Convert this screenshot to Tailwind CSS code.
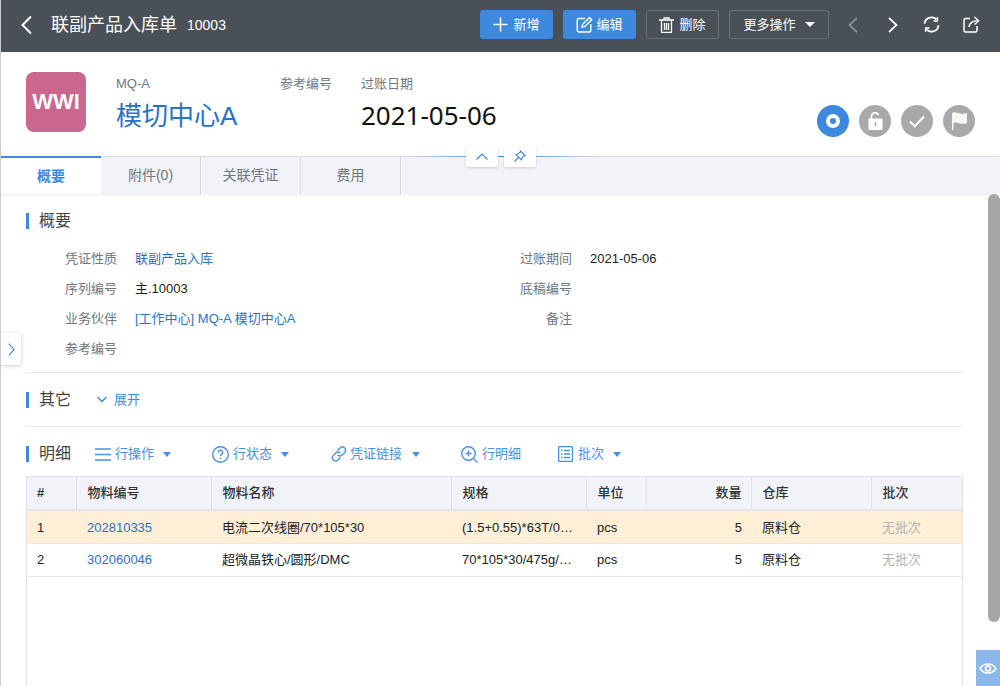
<!DOCTYPE html>
<html lang="zh">
<head>
<meta charset="utf-8">
<script src="https://cdn.jsdelivr.net/npm/@tailwindcss/browser@4"></script>
<title>联副产品入库单</title>
</head>
<body class="bg-white">
<div class="relative w-[1000px] h-[686px] overflow-hidden flex flex-col border-l border-[#cccccc] bg-white text-[13px] text-[#222] font-['Liberation_Sans','Noto_Sans_CJK_SC',sans-serif]">

  <!-- top bar -->
  <header class="h-[52px] shrink-0 bg-[#4a5057] flex items-center pb-[3px] text-white">
    <svg class="ml-[19px] w-[13px] h-[20px]" viewBox="0 0 13 20" fill="none" stroke="#fff" stroke-width="2"><path d="M11 1.500 2.500 10 11 18.500"/></svg>
    <span class="ml-[18px] text-[18px] leading-none">联副产品入库单</span>
    <span class="ml-[10px] text-[14px] leading-none">10003</span>
    <div class="ml-auto flex items-center gap-[10px] mr-[20px]">
      <button class="w-[73px] h-[29px] rounded-[3px] bg-[#3c89dd] flex items-center justify-center gap-[5px]">
        <svg class="w-[15px] h-[15px]" viewBox="0 0 15 15" fill="none" stroke="#fff" stroke-width="1.500"><path d="M7.500 0.500v14M0.500 7.500h14"/></svg>
        <span>新增</span>
      </button>
      <button class="w-[73px] h-[29px] rounded-[3px] bg-[#3c89dd] flex items-center justify-center gap-[3px]">
        <svg class="w-[17px] h-[17px]" viewBox="0 0 17 17" fill="none" stroke="#fff" stroke-width="1.400"><path d="M9 2.500H3a1.800 1.800 0 0 0-1.800 1.800v10A1.800 1.800 0 0 0 3 16h10a1.800 1.800 0 0 0 1.800-1.800V8"/><path d="M6.500 8.500 13.500 1.500l2.200 2.200-7 7-2.700.5z"/></svg>
        <span>编辑</span>
      </button>
      <button class="w-[73px] h-[29px] rounded-[3px] border border-[#697079] flex items-center justify-center gap-[5px]">
        <svg class="w-[15px] h-[16px]" viewBox="0 0 15 16" fill="none" stroke="#fff" stroke-width="1.300"><path d="M0 3h15M5 3V1h5v2M2.500 3v11.500a1 1 0 0 0 1 1h8a1 1 0 0 0 1-1V3M5.500 6v7M7.500 6v7M9.500 6v7"/></svg>
        <span>删除</span>
      </button>
      <button class="w-[100px] h-[29px] rounded-[3px] border border-[#697079] flex items-center justify-center gap-[9px]">
        <span>更多操作</span>
        <span class="w-0 h-0 border-x-[5px] border-x-transparent border-t-[5px] border-t-white"></span>
      </button>
      <div class="flex items-center ml-[9px]">
        <svg class="w-[10px] h-[16px]" viewBox="0 0 10 16" fill="none" stroke="#8a8f95" stroke-width="1.800"><path d="M9 .8 1.500 8 9 15.200"/></svg>
        <svg class="ml-[30px] w-[10px] h-[16px]" viewBox="0 0 10 16" fill="none" stroke="#fff" stroke-width="1.800"><path d="M1 .8 8.500 8 1 15.200"/></svg>
        <svg class="ml-[25px] w-[17px] h-[17px]" viewBox="0 0 17 17" fill="none" stroke="#fff" stroke-width="1.800"><path d="M1.500 7.800A7 7 0 0 1 13.500 3.500"/><path d="M15.500 9.200A7 7 0 0 1 3.500 13.500"/><path d="M14.500 1V5H10.500" stroke-width="1.300"/><path d="M2.500 16V12H6.500" stroke-width="1.300"/></svg>
        <svg class="ml-[23px] w-[17px] h-[17px]" viewBox="0 0 17 17" fill="none" stroke="#fff" stroke-width="1.500"><path d="M7 2.500H2.500a1.500 1.500 0 0 0-1.500 1.500v10.500A1.500 1.500 0 0 0 2.500 16h10a1.500 1.500 0 0 0 1.500-1.500V10"/><path d="M6 11c.5-4 3-6.200 9-6.200"/><path d="M11.500 1 15.800 4.800 11.500 8.500" stroke-width="1.300"/></svg>
      </div>
    </div>
  </header>

  <!-- document head -->
  <section class="h-[104px] shrink-0 flex relative">
    <div class="mt-[20px] ml-[25px] w-[60px] h-[60px] rounded-[8px] bg-[#cb668e] flex items-center justify-center text-white font-bold text-[22px] leading-none">WWI</div>
    <div class="ml-[30px] mt-[24px]">
      <div class="text-[13px] leading-[15px] text-[#6f7780]">MQ-A</div>
      <div class="mt-[7px] text-[26px] leading-[36px] text-[#2a72c9]">模切中心A</div>
    </div>
    <div class="absolute left-[279px] top-[24px] text-[13px] leading-[15px] text-[#6f7780]">参考编号</div>
    <div class="absolute left-[360px] top-[24px]">
      <div class="text-[13px] leading-[15px] text-[#6f7780]">过账日期</div>
      <div class="mt-[6px] text-[26px] leading-[36px] text-[#111] font-['Noto_Sans',sans-serif]">2021-05-06</div>
    </div>
    <div class="ml-auto mt-[53px] mr-[25px] flex gap-[10px] h-[32px]">
      <div class="w-[32px] h-[32px] rounded-full bg-[#3c89dd] flex items-center justify-center">
        <span class="w-[14px] h-[14px] rounded-full border-[4px] border-white"></span>
      </div>
      <div class="w-[32px] h-[32px] rounded-full bg-[#a9a9a9] flex items-center justify-center">
        <svg class="w-[15px] h-[18px]" viewBox="0 0 15 18"><path d="M3.500 7V4.500a3.600 3.600 0 0 1 7-1.200" fill="none" stroke="#fff" stroke-width="1.700"/><rect x=".5" y="6.500" width="14" height="11.500" rx="1" fill="#fff"/><rect x="6.700" y="10" width="1.600" height="4.500" fill="#a9a9a9"/></svg>
      </div>
      <div class="w-[32px] h-[32px] rounded-full bg-[#a9a9a9] flex items-center justify-center">
        <svg class="w-[16px] h-[13px]" viewBox="0 0 16 13" fill="none" stroke="#fff" stroke-width="2"><path d="M1 6.500 5.800 11.300 15 1.500"/></svg>
      </div>
      <div class="w-[32px] h-[32px] rounded-full bg-[#a9a9a9] flex items-center justify-center">
        <svg class="w-[17px] h-[18px]" viewBox="0 0 17 18"><path d="M1 1c3-1.500 5 0 8 .5 2.500.4 4.500.2 7-.5v10c-2.500 1-4.500 1-7 .5-3-.6-5-1.500-6.500-.5V18H1z" fill="#f8f7f2"/></svg>
      </div>
    </div>
  </section>

  <!-- tabs -->
  <nav class="relative h-[38px] shrink-0 flex bg-[#f1f3f8] border-t border-[#d9dde7] shadow-[0_1px_3px_rgba(0,0,0,0.08)] text-[14px] text-[#6f7780]">
    <div class="absolute left-[400px] top-[-1px] w-[200px] h-px bg-linear-to-r from-transparent via-[#3c89dd] to-transparent"></div>
    <div class="relative w-[100px] h-[38px] -mt-px bg-white border-t-2 border-[#3c89dd] flex items-center justify-center font-bold text-[#3c89dd]">概要</div>
    <div class="w-[100px] flex items-center justify-center border-r border-[#d9dde7]">附件(0)</div>
    <div class="w-[100px] flex items-center justify-center border-r border-[#d9dde7]">关联凭证</div>
    <div class="w-[100px] flex items-center justify-center border-r border-[#d9dde7]">费用</div>
    <div class="absolute left-[465px] top-[-12px] flex gap-[6px]">
      <div class="w-[32px] h-[22px] rounded-[2px] bg-white shadow-[0_1px_3px_rgba(0,0,0,0.15)] flex items-center justify-center">
        <svg class="w-[12px] h-[7px]" viewBox="0 0 12 7" fill="none" stroke="#3c89dd" stroke-width="1.200"><path d="M.5 6.500 6 1l5.500 5.500"/></svg>
      </div>
      <div class="w-[32px] h-[22px] rounded-[2px] bg-white shadow-[0_1px_3px_rgba(0,0,0,0.15)] flex items-center justify-center">
        <svg class="w-[12px] h-[12px]" viewBox="0 0 12 12" fill="none" stroke="#3c89dd" stroke-width="1.100"><path d="M6.500 1 11 5.500 9.500 6 7.800 8.500 7.500 10 2 4.500 3.500 4.200 6 2.500zM4.500 7.500.5 11.500"/></svg>
      </div>
    </div>
  </nav>

  <!-- content -->
  <main class="flex-1 min-h-0 flex flex-col pl-[25px] pr-[37px]">
    <div class="pt-[19px] h-[179px] shrink-0 border-b border-[#e8e9ed]">
      <div class="flex items-center h-[16px]">
        <span class="w-[3px] h-[16px] bg-[#3c89dd]"></span>
        <span class="ml-[10px] text-[16px] text-[#444]">概要</span>
      </div>
      <div class="mt-[15px] grid grid-cols-[91px_313px_106px_1fr] gap-x-[18px] auto-rows-[30px] items-center text-[13px] leading-[30px]">
        <span class="text-right text-[#6f7780]">凭证性质</span><span class="text-[#2a72c9]">联副产品入库</span>
        <span class="text-right text-[#6f7780]">过账期间</span><span>2021-05-06</span>
        <span class="text-right text-[#6f7780]">序列编号</span><span>主.10003</span>
        <span class="text-right text-[#6f7780]">底稿编号</span><span></span>
        <span class="text-right text-[#6f7780]">业务伙伴</span><span class="text-[#2a72c9]">[工作中心] MQ-A 模切中心A</span>
        <span class="text-right text-[#6f7780]">备注</span><span></span>
        <span class="text-right text-[#6f7780]">参考编号</span>
      </div>
    </div>

    <div class="h-[54px] shrink-0 flex items-center border-b border-[#e8e9ed]">
      <span class="w-[3px] h-[16px] bg-[#3c89dd]"></span>
      <span class="ml-[10px] text-[16px] text-[#444]">其它</span>
      <svg class="ml-[26px] w-[10px] h-[7px]" viewBox="0 0 10 7" fill="none" stroke="#3c89dd" stroke-width="1.400"><path d="M.5 1 5 5.500 9.500 1"/></svg>
      <span class="ml-[7px] text-[13px] text-[#3c89dd]">展开</span>
    </div>

    <div class="h-[49px] shrink-0 flex items-center pt-[5px] text-[13px] text-[#4a90e2]">
      <span class="w-[3px] h-[16px] bg-[#3c89dd]"></span>
      <span class="ml-[10px] text-[16px] text-[#444]">明细</span>
      <div class="ml-[24px] flex items-center">
        <svg class="w-[16px] h-[13px]" viewBox="0 0 16 13" fill="none" stroke="#4a90e2" stroke-width="1.300"><path d="M0 1h16M0 6.500h16M0 12h16"/></svg>
        <span class="ml-[4px]">行操作</span>
        <span class="ml-[9px] w-0 h-0 border-x-[4.500px] border-x-transparent border-t-[5px] border-t-[#4a90e2]"></span>
      </div>
      <div class="ml-[41px] flex items-center">
        <svg class="w-[17px] h-[17px]" viewBox="0 0 17 17" fill="none" stroke="#4a90e2" stroke-width="1.400"><circle cx="8.500" cy="8.500" r="7.800"/><path d="M6.300 6.500c0-3 4.500-3 4.500-.2 0 1.800-2.300 1.800-2.300 3.700"/><path d="M8.500 11.500v1.500"/></svg>
        <span class="ml-[4px]">行状态</span>
        <span class="ml-[9px] w-0 h-0 border-x-[4.500px] border-x-transparent border-t-[5px] border-t-[#4a90e2]"></span>
      </div>
      <div class="ml-[42px] flex items-center">
        <svg class="w-[16px] h-[16px]" viewBox="0 0 16 16" fill="none" stroke="#4a90e2" stroke-width="1.400"><path d="M6.500 4.500 8.800 2.200a3.200 3.200 0 0 1 5 4.200l-2.600 2.700a3.200 3.200 0 0 1-4.700-.2"/><path d="M9.500 11.500 7.200 13.800a3.200 3.200 0 0 1-5-4.200l2.600-2.700a3.200 3.200 0 0 1 4.700.2"/></svg>
        <span class="ml-[3px]">凭证链接</span>
        <span class="ml-[10px] w-0 h-0 border-x-[4.500px] border-x-transparent border-t-[5px] border-t-[#4a90e2]"></span>
      </div>
      <div class="ml-[41px] flex items-center">
        <svg class="w-[17px] h-[17px]" viewBox="0 0 17 17" fill="none" stroke="#4a90e2" stroke-width="1.400"><circle cx="7.500" cy="7.500" r="6.800"/><path d="M12.500 12.500 16.500 16.500M7.500 4.500v6M4.500 7.500h6"/></svg>
        <span class="ml-[4px]">行明细</span>
      </div>
      <div class="ml-[37px] flex items-center">
        <svg class="w-[15px] h-[16px]" viewBox="0 0 15 16" fill="none" stroke="#4a90e2" stroke-width="1.300"><rect x=".6" y=".6" width="13.800" height="14.800" rx="1"/><path d="M3 4.500h1.500M6 4.500h6M3 8h1.500M6 8h6M3 11.500h1.500M6 11.500h6"/></svg>
        <span class="ml-[5px]">批次</span>
        <span class="ml-[9px] w-0 h-0 border-x-[4.500px] border-x-transparent border-t-[5px] border-t-[#4a90e2]"></span>
      </div>
    </div>

    <div class="flex-1 min-h-0 border-x border-t border-[#dfe2ea]">
      <table class="table-fixed w-full border-collapse text-[13px]">
        <colgroup>
          <col class="w-[49px]"><col class="w-[135px]"><col class="w-[240px]"><col class="w-[135px]"><col class="w-[60px]"><col class="w-[105px]"><col class="w-[120px]"><col class="w-[91px]">
        </colgroup>
        <thead>
          <tr class="h-[33px] bg-[#f1f3f8] border-b-2 border-[#e4e6ec] text-[#333] font-medium">
            <th class="pl-[10px] text-left font-bold border-r border-[#dfe2ea]">#</th>
            <th class="pl-[11px] text-left font-medium border-r border-[#dfe2ea]">物料编号</th>
            <th class="pl-[11px] text-left font-medium border-r border-[#dfe2ea]">物料名称</th>
            <th class="pl-[11px] text-left font-medium border-r border-[#dfe2ea]">规格</th>
            <th class="pl-[11px] text-left font-medium border-r border-[#dfe2ea]">单位</th>
            <th class="pr-[9px] text-right font-medium border-r border-[#dfe2ea]">数量</th>
            <th class="pl-[11px] text-left font-medium border-r border-[#dfe2ea]">仓库</th>
            <th class="pl-[11px] text-left font-medium">批次</th>
          </tr>
        </thead>
        <tbody>
          <tr class="h-[33px] bg-[#feefd6] border-b border-[#eee7da]">
            <td class="pl-[10px] pt-px">1</td>
            <td class="pl-[11px] pt-px text-[#2a72c9]">202810335</td>
            <td class="pl-[11px] pt-px">电流二次线圈/70*105*30</td>
            <td class="pl-[11px] pr-[10px] pt-px truncate">(1.5+0.55)*63T/0.35*2P</td>
            <td class="pl-[11px] pt-px">pcs</td>
            <td class="pr-[9px] pt-px text-right">5</td>
            <td class="pl-[11px] pt-px">原料仓</td>
            <td class="pl-[11px] pt-px text-[#b3b3b3]">无批次</td>
          </tr>
          <tr class="h-[33px] border-b border-[#e8e9ed]">
            <td class="pl-[10px] pt-px">2</td>
            <td class="pl-[11px] pt-px text-[#2a72c9]">302060046</td>
            <td class="pl-[11px] pt-px">超微晶铁心/圆形/DMC</td>
            <td class="pl-[11px] pr-[10px] pt-px truncate">70*105*30/475g/DMC-A</td>
            <td class="pl-[11px] pt-px">pcs</td>
            <td class="pr-[9px] pt-px text-right">5</td>
            <td class="pl-[11px] pt-px">原料仓</td>
            <td class="pl-[11px] pt-px text-[#b3b3b3]">无批次</td>
          </tr>
        </tbody>
      </table>
    </div>
  </main>

  <!-- overlays -->
  <div class="absolute left-0 top-[333px] w-[20px] h-[32px] rounded-r-[2px] bg-white shadow-[0_1px_4px_rgba(0,0,0,0.2)] flex items-center justify-center">
    <svg class="w-[7px] h-[13px]" viewBox="0 0 7 13" fill="none" stroke="#3c89dd" stroke-width="1.100"><path d="M.7.7 6.300 6.500.7 12.300"/></svg>
  </div>
  <div class="absolute right-0 top-[194px] w-[12px] h-[428px] rounded-[6px] bg-[#a6a6a6]"></div>
  <div class="absolute right-0 top-[650px] w-[24px] h-[36px] bg-[#8ab8ec] flex items-center justify-center">
    <svg class="w-[18px] h-[13px]" viewBox="0 0 18 13" fill="none" stroke="#fff" stroke-width="1.500"><path d="M1 6.500C5 .5 13 .5 17 6.500 13 12.500 5 12.500 1 6.500z"/><circle cx="9" cy="6.500" r="2.500"/></svg>
  </div>
</div>
</body>
</html>
